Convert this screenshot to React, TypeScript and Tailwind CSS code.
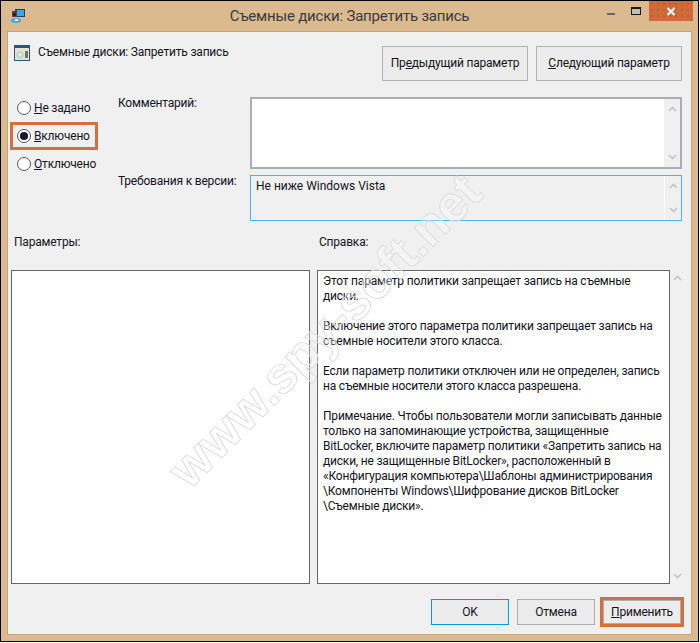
const font = { fontFamily: 'Roboto, "Open Sans", sans-serif' };

function Radio({ checked }: { checked?: boolean }) {
  return (
    <span className="w-[14px] h-[14px] rounded-full border border-[#555] bg-white flex items-center justify-center shrink-0">
      {checked && <span className="w-[8px] h-[8px] rounded-full bg-[#1b1430]" />}
    </span>
  );
}

function Chev({ up }: { up?: boolean }) {
  return (
    <svg width="9" height="6" viewBox="0 0 9 6">
      <path d={up ? "M1 5L4.5 1.5L8 5" : "M1 1L4.5 4.5L8 1"} fill="none" stroke="#c4c4c4" strokeWidth="1.6" />
    </svg>
  );
}

function Scroll() {
  return (
    <div className="w-[17px] flex flex-col items-center justify-between py-[7px] border-l border-white bg-[#f0f0f0]">
      <Chev up />
      <Chev />
    </div>
  );
}

export default function App() {
  return (
    <div style={font} className="w-[699px] h-[642px] border border-black bg-[#dcba90] flex flex-col text-[12px] leading-[15px] tracking-[-0.2px] text-[#14141e] relative overflow-hidden">
      <div className="h-[30px] flex items-start shrink-0">
        <div className="w-[100px] pl-[9px] pt-[7px]">
          <svg width="16" height="16" viewBox="0 0 16 16">
            <rect x="5" y="1" width="10" height="8" fill="#1c3f6e" />
            <rect x="7" y="2" width="7" height="6" fill="#3fa3e8" />
            <rect x="2" y="3" width="5" height="6" fill="#6b3b2a" />
            <rect x="3" y="5" width="3" height="3" fill="#23252c" />
            <ellipse cx="6" cy="12.5" rx="5" ry="2.5" fill="#4ea3d8" />
            <rect x="5" y="11" width="3" height="2" fill="#e8f0f4" />
          </svg>
        </div>
        <div className="flex-1 text-center text-[15px] leading-[20px] pt-[5px] text-[#3a3a3a]">Съемные диски: Запретить запись</div>
        <div className="w-[100px] flex justify-end items-start">
          <div className="w-[26px] h-[20px] flex items-center justify-center">
            <span className="w-[8px] h-[2px] bg-[#6b6560] mt-[5px]" />
          </div>
          <div className="w-[26px] h-[20px] flex items-center justify-center">
            <span className="w-[10px] h-[8px] border border-t-2 border-[#1a1630]" />
          </div>
          <div className="w-[45px] h-[20px] mr-[5px] bg-[#cf6a3a] bg-[radial-gradient(#a8502a_0.6px,transparent_0.8px)] bg-[size:6px_6px] flex items-center justify-center">
            <svg width="10" height="9" viewBox="0 0 10 9"><path d="M1.5 1L8.5 8M8.5 1L1.5 8" stroke="#fff" strokeWidth="2" /></svg>
          </div>
        </div>
      </div>

      <div className="flex-1 mx-[6px] mb-[6px] border border-[#c9a277] bg-[#f0f0f0] flex flex-col">
        <div className="flex justify-between items-start pt-[14px] pl-[6px] pr-[9px] h-[65px] shrink-0">
          <div className="flex items-center gap-[8px] -mt-[1px]">
            <svg width="16" height="16" viewBox="0 0 16 16">
              <rect width="16" height="16" fill="#2f5373" />
              <rect x="1" y="3" width="14" height="12" fill="#e8e4d0" />
              <circle cx="6" cy="10" r="4" fill="#c8d4d0" />
              <circle cx="6" cy="10" r="1.2" fill="#f6f4e6" />
              <rect x="11" y="6" width="3" height="7" fill="#5f7d5a" />
            </svg>
            <span className="-mt-[1px]">Съемные диски: Запретить запись</span>
          </div>
          <div className="flex gap-[8px]">
            <button className="w-[146px] h-[35px] border border-[#adb2b5] bg-[#ececec]">Пр<u>е</u>дыдущий параметр</button>
            <button className="w-[146px] h-[35px] border border-[#adb2b5] bg-[#ececec]"><u>С</u>ледующий параметр</button>
          </div>
        </div>

        <div className="flex h-[124px] shrink-0">
          <div className="w-[110px] pl-[2px] flex flex-col -mt-[3px]">
            <label className="h-[28px] flex items-center gap-[3px] pl-[4px] border-[3px] border-transparent whitespace-nowrap"><Radio /><span><u>Н</u>е задано</span></label>
            <label className="h-[28px] flex items-center gap-[3px] pl-[4px] w-[88px] border-[3px] border-[#d2703f] whitespace-nowrap"><Radio checked /><span><u>В</u>ключено</span></label>
            <label className="h-[28px] flex items-center gap-[3px] pl-[4px] border-[3px] border-transparent whitespace-nowrap"><Radio /><span><u>О</u>тключено</span></label>
          </div>
          <div className="flex-1 flex flex-col gap-[6px] pr-[9px]">
            <div className="flex h-[72px]">
              <div className="w-[132px] -mt-[1px]">Комментарий:</div>
              <div className="flex-1 flex border-2 border-[#abadb3] bg-white">
                <div className="flex-1" />
                <Scroll />
              </div>
            </div>
            <div className="flex h-[46px]">
              <div className="w-[132px] -mt-[1px]">Требования к версии:</div>
              <div className="flex-1 flex border border-[#4db4ee] bg-[#f0f0f0]">
                <div className="flex-1 pl-[5px] pt-[3px] tracking-normal">Не ниже Windows Vista</div>
                <Scroll />
              </div>
            </div>
          </div>
        </div>

        <div className="flex h-[49px] items-start shrink-0 pt-[14px]">
          <div className="w-[311px] pl-[6px]">Параметры:</div>
          <div>Справка:</div>
        </div>

        <div className="flex h-[314px] pl-[3px] shrink-0">
          <div className="w-[299px] border border-[#666] bg-white" />
          <div className="w-[353px] ml-[7px] border border-[#666] bg-white pl-[5px] pt-[3px] whitespace-nowrap">
            <p>Этот параметр политики запрещает запись на съемные<br />диски.</p>
            <p className="mt-[15px]">Включение этого параметра политики запрещает запись на<br />съемные носители этого класса.</p>
            <p className="mt-[15px]">Если параметр политики отключен или не определен, запись<br />на съемные носители этого класса разрешена.</p>
            <p className="mt-[15px]">Примечание. Чтобы пользователи могли записывать данные<br />только на запоминающие устройства, защищенные<br />BitLocker, включите параметр политики «Запретить запись на<br />диски, не защищенные BitLocker», расположенный в<br />«Конфигурация компьютера\Шаблоны администрирования<br />\Компоненты Windows\Шифрование дисков BitLocker<br />\Съемные диски».</p>
          </div>
          <div className="w-[14px] flex flex-col items-center justify-between py-[5px]">
            <Chev up />
            <Chev />
          </div>
        </div>

        <div className="flex justify-end items-center flex-1 pr-[7px] pt-[6px]">
          <button className="w-[78px] h-[26px] border border-[#0a97e0] bg-[#ececec]">OK</button>
          <button className="w-[78px] h-[26px] ml-[8px] border border-[#adadad] bg-[#ececec]">Отмена</button>
          <div className="w-[84px] h-[30px] ml-[5px] border-[3px] border-[#d2703f] flex">
            <button className="flex-1 border border-[#adadad] bg-[#ececec]"><u>П</u>рименить</button>
          </div>
        </div>
      </div>

      <div className="absolute left-[89px] top-[300px] w-[470px] text-center text-[51px] leading-[60px] font-bold text-white/30 [-webkit-text-stroke:1px_#dedede] -rotate-[45deg] pointer-events-none whitespace-nowrap" style={{ fontFamily: '"Liberation Sans", sans-serif' }}>www.spy-soft.net</div>
    </div>
  );
}
